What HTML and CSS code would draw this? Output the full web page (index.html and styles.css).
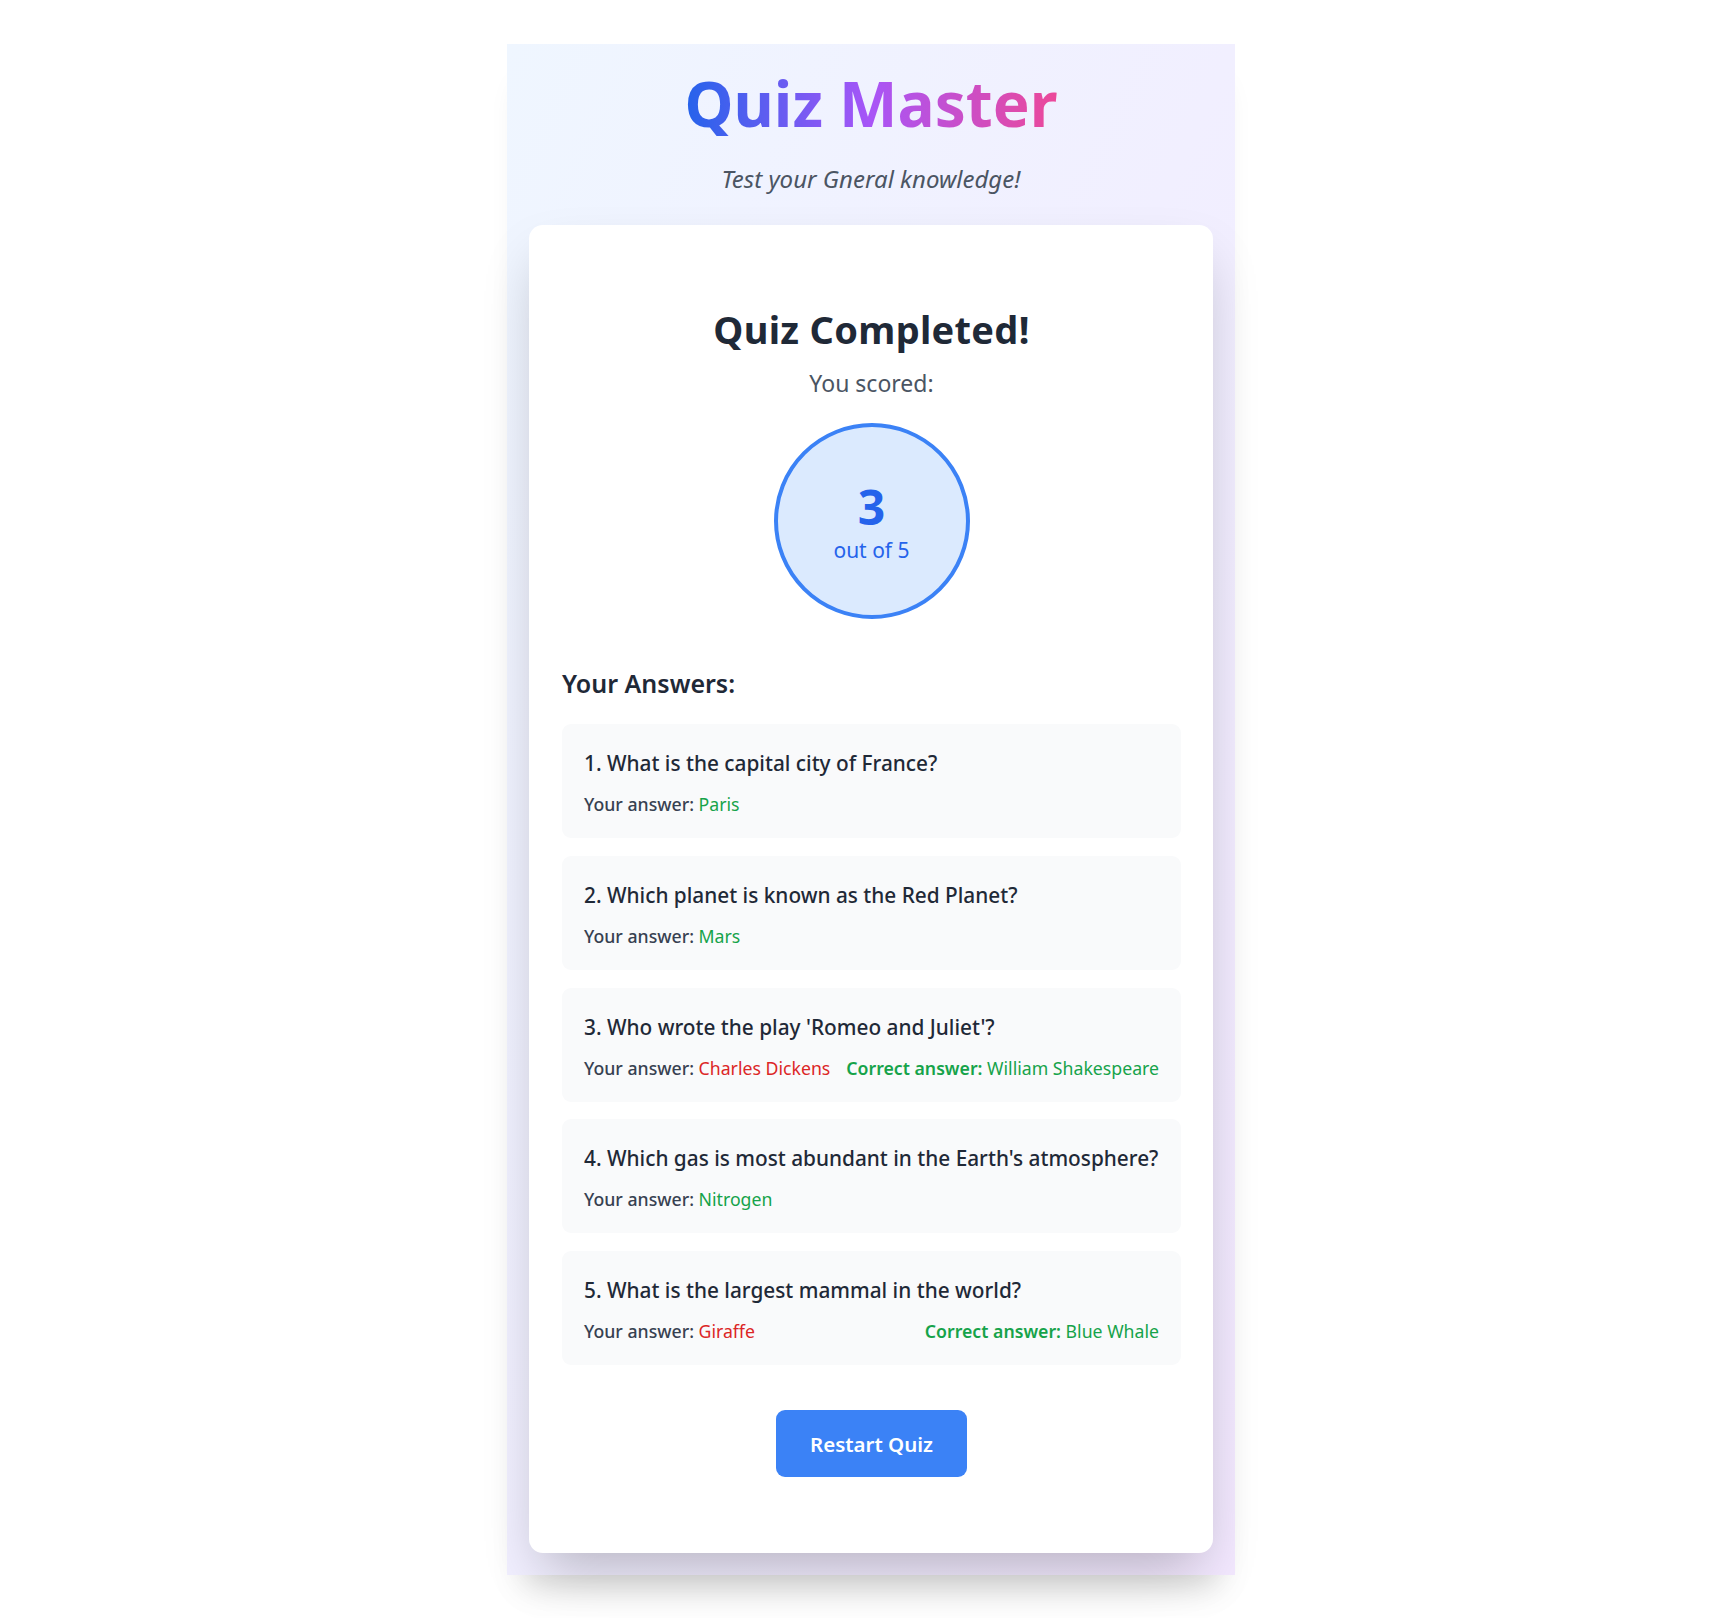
FILE: index.html
```html
<!DOCTYPE html>
<html lang="en">
<head>
<meta charset="UTF-8">
<title>Quiz Master</title>
<link rel="stylesheet" href="styles.css">
</head>
<body>
<div class="page">
  <main class="app">
    <header class="app-header">
      <h1 class="app-title">Quiz Master</h1>
      <p class="app-subtitle">Test your Gneral knowledge!</p>
    </header>

    <section class="card">
      <div class="results">
        <h2 class="results-title">Quiz Completed!</h2>
        <p class="results-label">You scored:</p>
        <div class="score-circle">
          <span class="score-value">3</span>
          <span class="score-total">out of 5</span>
        </div>

        <div class="answers">
          <h3 class="answers-title">Your Answers:</h3>
          <ul class="answer-list">
            <li class="answer-item">
              <p class="question">1. What is the capital city of France?</p>
              <div class="answer-row">
                <span class="answer-label">Your answer: <span class="ok">Paris</span></span>
              </div>
            </li>
            <li class="answer-item">
              <p class="question">2. Which planet is known as the Red Planet?</p>
              <div class="answer-row">
                <span class="answer-label">Your answer: <span class="ok">Mars</span></span>
              </div>
            </li>
            <li class="answer-item">
              <p class="question">3. Who wrote the play 'Romeo and Juliet'?</p>
              <div class="answer-row">
                <span class="answer-label">Your answer: <span class="bad">Charles Dickens</span></span>
                <span class="correct-label">Correct answer: <span class="ok">William Shakespeare</span></span>
              </div>
            </li>
            <li class="answer-item">
              <p class="question">4. Which gas is most abundant in the Earth's atmosphere?</p>
              <div class="answer-row">
                <span class="answer-label">Your answer: <span class="ok">Nitrogen</span></span>
              </div>
            </li>
            <li class="answer-item">
              <p class="question">5. What is the largest mammal in the world?</p>
              <div class="answer-row">
                <span class="answer-label">Your answer: <span class="bad">Giraffe</span></span>
                <span class="correct-label">Correct answer: <span class="ok">Blue Whale</span></span>
              </div>
            </li>
          </ul>
        </div>

        <button class="restart-btn" type="button">Restart Quiz</button>
      </div>
    </section>
  </main>
</div>
</body>
</html>
```

FILE: styles.css
```css
* {
  box-sizing: border-box;
}

html, body {
  margin: 0;
  padding: 0;
  background: #ffffff;
}

body {
  font-family: "Noto Sans", "Open Sans", sans-serif;
  color: #1f2937;
}

.page {
  display: flex;
  justify-content: center;
  padding-top: 44px;
  padding-bottom: 44px;
  padding-left: 20px;
}

.app {
  width: 728px;
  padding: 26px 22px 22px;
  background: linear-gradient(to bottom right, #eff6ff, #f3e8ff);
  box-shadow: 0 28px 30px -16px rgba(0, 0, 0, 0.13);
}

.app-header {
  text-align: center;
}

.app-title {
  display: inline-block;
  margin: 0;
  font-size: 62px;
  line-height: 66px;
  font-weight: 700;
  background: linear-gradient(to right, #2563eb, #a855f7, #ec4899);
  -webkit-background-clip: text;
  background-clip: text;
  color: transparent;
}

.app-subtitle {
  margin: 28px 0 0;
  font-size: 24px;
  line-height: 30px;
  font-style: italic;
  color: #4b5563;
}

.card {
  margin-top: 31px;
  background: #ffffff;
  border-radius: 14px;
  padding: 33px 32px 33px 33px;
  box-shadow: 0 27px 55px -13px rgba(0, 0, 0, 0.25);
}

.results {
  display: flex;
  flex-direction: column;
  align-items: center;
  padding-top: 50px;
  padding-bottom: 43px;
}

.results-title {
  margin: 0;
  font-size: 38px;
  line-height: 42px;
  font-weight: 700;
  letter-spacing: 0.3px;
  color: #1f2937;
}

.results-label {
  margin: 18px 0 0;
  font-size: 23px;
  line-height: 30px;
  color: #4b5563;
}

.score-circle {
  margin-top: 25px;
  width: 196px;
  height: 196px;
  border-radius: 50%;
  border: 4px solid #3b82f6;
  background: #dbeafe;
  display: flex;
  flex-direction: column;
  align-items: center;
  justify-content: center;
  gap: 5px;
  padding-top: 2px;
  color: #2563eb;
}

.score-value {
  font-size: 48px;
  line-height: 50px;
  font-weight: 700;
}

.score-total {
  font-size: 21px;
  line-height: 26px;
}

.answers {
  align-self: stretch;
  margin-top: 48px;
}

.answers-title {
  margin: 0;
  font-size: 25px;
  line-height: 32px;
  font-weight: 600;
  color: #1f2937;
}

.answer-list {
  list-style: none;
  margin: 25px 0 0;
  padding: 0;
  display: flex;
  flex-direction: column;
  gap: 17.8px;
}

.answer-item {
  background: #f9fafb;
  border-radius: 9px;
  padding: 25px 22px 21px;
  height: 114px;
}

.question {
  margin: 0;
  font-size: 20.8px;
  line-height: 28px;
  font-weight: 500;
  color: #1f2937;
}

.answer-row {
  margin-top: 15px;
  display: flex;
  justify-content: space-between;
  gap: 10px;
  font-size: 17.7px;
  line-height: 24px;
  white-space: nowrap;
}

.answer-label {
  font-weight: 500;
  color: #374151;
}

.correct-label {
  font-weight: 600;
  color: #16a34a;
}

.ok {
  font-weight: 400;
  color: #16a34a;
}

.bad {
  font-weight: 400;
  color: #dc2626;
}

.restart-btn {
  margin-top: 45px;
  padding: 19.5px 33.5px;
  border: none;
  border-radius: 9px;
  background: #3b82f6;
  color: #ffffff;
  font-family: inherit;
  font-size: 20.5px;
  line-height: 28px;
  font-weight: 600;
  cursor: pointer;
}
```
